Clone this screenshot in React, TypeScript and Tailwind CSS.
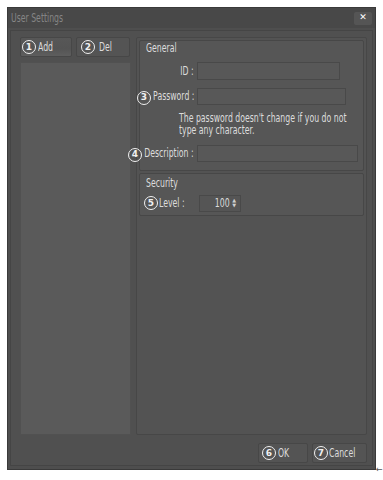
const font = "font-['DejaVu_Sans_Condensed','DejaVu_Sans',sans-serif]";

function T({ children, right }: { children: React.ReactNode; right?: boolean }) {
  return (
    <span className={`inline-block whitespace-nowrap scale-x-[0.72] ${right ? 'origin-right' : 'origin-left'}`}>
      {children}
    </span>
  );
}

function Num({ n }: { n: number }) {
  return (
    <span className="inline-flex h-[14px] w-[14px] shrink-0 items-center justify-center rounded-full border-[1.5px] border-[#f0f0f0] font-['DejaVu_Sans',sans-serif] text-[9px] font-bold leading-none text-[#f0f0f0]">
      {n}
    </span>
  );
}

type FieldProps = { label: string; num?: number; numLeft?: string; width: string; height: string };

function Field({ label, num, numLeft, width, height }: FieldProps) {
  return (
    <div className="flex items-center">
      <div className="relative flex w-[48px] shrink-0 items-center justify-end">
        {num !== undefined && (
          <span className={`absolute top-1/2 -translate-y-1/2 ${numLeft}`}>
            <Num n={num} />
          </span>
        )}
        <T right>{label} :</T>
      </div>
      <div className={`ml-[3px] border border-[#494949] bg-[#585858] ${width} ${height}`} />
    </div>
  );
}

export default function App() {
  return (
    <div className={`relative h-[480px] w-[383px] overflow-hidden bg-white ${font} text-[12px] text-[#dcdcdc]`}>
      <div className="absolute left-[7px] top-[7px] flex h-[463px] w-[369px] flex-col border border-[#3a3a3a] bg-[#4e4e4e]">
        <div className="flex h-[20px] items-center justify-between bg-[#484848] pl-[3px] pr-[3px]">
          <span className="text-[12px] text-[#858585]">
            <T>User Settings</T>
          </span>
          <span className="flex h-[13px] w-[18px] items-center justify-center rounded-[2px] bg-[#555555] font-['DejaVu_Sans',sans-serif] text-[9px] font-bold text-white">
            ✕
          </span>
        </div>
        <div className="mx-[2px] mb-[3px] mt-[2px] flex flex-1 flex-col border border-[#454545] bg-[#505050] pl-[9px] pr-[5px] pt-[6px]">
          <div className="flex h-[398px] gap-[5px]">
            <div className="flex w-[111px] shrink-0 flex-col gap-[5px]">
              <div className="flex gap-[4px]">
                <div className="flex h-[20px] w-[52px] items-center gap-[2px] rounded-[2px] border border-[#474747] bg-[linear-gradient(180deg,#575757,#545454_60%,#5e5e5e)] pl-[1px]">
                  <Num n={1} />
                  <T>Add</T>
                </div>
                <div className="flex h-[20px] w-[54px] items-center gap-[4px] rounded-[2px] border border-[#474747] bg-[#545454] pl-[4px]">
                  <Num n={2} />
                  <T>Del</T>
                </div>
              </div>
              <div className="flex-1 border border-[#515151] bg-[#5a5a5a]" />
            </div>
            <div className="flex w-[231px] shrink-0 flex-col gap-[2px] rounded-[2px] border border-[#474747] bg-[#535353] px-[2px] pt-[2px]">
              <div className="flex h-[131px] flex-col rounded-[2px] border border-[#474747] bg-[#565656] pl-[6px] pt-[1px]">
                <span className="h-[13px] leading-[13px]">
                  <T>General</T>
                </span>
                <div className="mt-[7px] flex flex-col gap-[7px]">
                  <Field label="ID" width="w-[143px]" height="h-[18px]" />
                  <Field label="Password" num={3} numLeft="left-[-9px]" width="w-[149px]" height="h-[17px]" />
                </div>
                <div className="ml-[33px] mt-[7px] flex w-[180px] flex-col leading-[12px]">
                  <T>The password doesn't change if you do not</T>
                  <T>type any character.</T>
                </div>
                <div className="mt-[8px]">
                  <Field label="Description" num={4} numLeft="left-[-18px]" width="w-[161px]" height="h-[17px]" />
                </div>
              </div>
              <div className="flex h-[43px] flex-col rounded-[2px] border border-[#474747] bg-[#565656] pl-[4px] pt-[2px]">
                <span className="h-[15px] pl-[2px] leading-[15px]">
                  <T>Security</T>
                </span>
                <div className="mt-[3px] flex items-center">
                  <Num n={5} />
                  <span className="ml-[1px] w-[40px]">
                    <T>Level :</T>
                  </span>
                  <div className="flex h-[17px] w-[42px] items-center justify-end gap-[3px] border border-[#494949] bg-[#555555] pr-[4px]">
                    <span className="flex w-[20px] justify-end">
                      <T right>100</T>
                    </span>
                    <span className="flex flex-col font-['DejaVu_Sans',sans-serif] text-[5px] leading-[5px] text-[#cfcfcf]">
                      <span>▲</span>
                      <span>▼</span>
                    </span>
                  </div>
                </div>
              </div>
              <div className="flex-1" />
            </div>
          </div>
          <div className="mt-[8px] flex justify-end gap-[4px]">
            <div className="flex h-[20px] w-[50px] items-center gap-[2px] rounded-[2px] border border-[#474747] bg-[#545454] pl-[3px]">
              <Num n={6} />
              <T>OK</T>
            </div>
            <div className="flex h-[20px] w-[55px] items-center gap-[1px] rounded-[2px] border border-[#474747] bg-[#545454] pl-[1px]">
              <Num n={7} />
              <T>Cancel</T>
            </div>
          </div>
        </div>
      </div>
      <span className="absolute left-[376px] top-[463px] text-[9px] text-[#555555]">←</span>
    </div>
  );
}
